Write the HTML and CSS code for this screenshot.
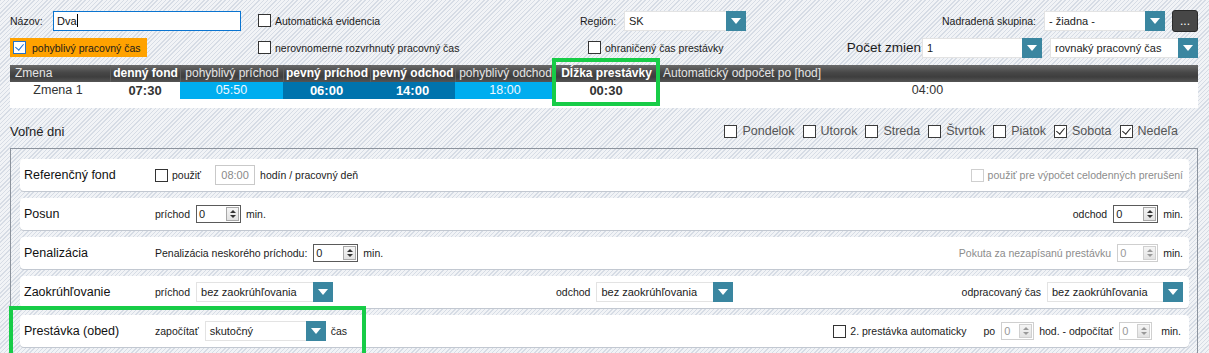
FILE: index.html
```html
<!DOCTYPE html>
<html lang="sk">
<head>
    <meta charset="UTF-8">
    <title>Pracovný čas - skupina</title>
    <link rel="stylesheet" href="styles.css">
</head>
<body>
    <!-- Top settings -->
    <div class="line line1">
        <div class="cell cell-name">
            <span class="lbl lbl-name">Názov:</span>
            <div class="textbox">Dva<span class="caret"></span></div>
        </div>
        <div class="cell cell-auto">
            <label class="check"><span class="box"></span>Automatická evidencia</label>
        </div>
        <div class="cell">
            <span class="lbl lbl-region">Región:</span>
            <div class="select w122"><span>SK</span><i class="arrow"></i></div>
        </div>
        <div class="cell cell-right">
            <span class="lbl">Nadradená skupina:</span>
            <div class="select w121"><span>- žiadna -</span><i class="arrow"></i></div>
            <button class="more">...</button>
        </div>
    </div>

    <div class="line line2">
        <div class="cell cell-name">
            <label class="check flexi"><span class="box checked blue"></span>pohyblivý pracovný čas</label>
        </div>
        <div class="cell cell-uneven">
            <label class="check"><span class="box"></span>nerovnomerne rozvrhnutý pracovný čas</label>
        </div>
        <div class="cell">
            <label class="check"><span class="box"></span>ohraničený čas prestávky</label>
        </div>
        <div class="cell cell-right">
            <span class="lbl lbl-count">Počet zmien</span>
            <div class="select w120"><span>1</span><i class="arrow"></i></div>
            <div class="select w148"><span>rovnaký pracovný čas</span><i class="arrow"></i></div>
        </div>
    </div>

    <!-- Shifts table -->
    <div class="shifts">
        <div class="shifts-head">
            <div class="th left">Zmena</div>
            <div class="th bold">denný fond</div>
            <div class="th">pohyblivý príchod</div>
            <div class="th bold">pevný príchod</div>
            <div class="th bold">pevný odchod</div>
            <div class="th">pohyblivý odchod</div>
            <div class="th bold">Dĺžka prestávky</div>
            <div class="th left">Automatický odpočet po [hod]</div>
        </div>
        <div class="shifts-row">
            <div class="td">Zmena 1</div>
            <div class="td bold">07:30</div>
            <div class="td flex-time">05:50</div>
            <div class="td fixed-time">06:00</div>
            <div class="td fixed-time">14:00</div>
            <div class="td flex-time">18:00</div>
            <div class="td bold">00:30</div>
            <div class="td">04:00</div>
        </div>
    </div>

    <!-- Free days -->
    <div class="free-days">
        <span class="free-title">Voľné dni</span>
        <div class="days">
            <label class="check day"><span class="box"></span>Pondelok</label>
            <label class="check day"><span class="box"></span>Utorok</label>
            <label class="check day"><span class="box"></span>Streda</label>
            <label class="check day"><span class="box"></span>Štvrtok</label>
            <label class="check day"><span class="box"></span>Piatok</label>
            <label class="check day"><span class="box checked"></span>Sobota</label>
            <label class="check day"><span class="box checked"></span>Nedeľa</label>
        </div>
    </div>

    <div class="panel">
        <div class="card">
            <div class="card-title">Referenčný fond</div>
            <label class="check"><span class="box"></span>použiť</label>
            <div class="textbox small disabled">08:00</div>
            <span class="txt">hodín / pracovný deň</span>
            <div class="right">
                <label class="check muted"><span class="box disabled"></span>použiť pre výpočet celodenných prerušení</label>
            </div>
        </div>

        <div class="card">
            <div class="card-title">Posun</div>
            <span class="txt">príchod</span>
            <div class="spin w45"><span>0</span><i class="spin-btn"></i></div>
            <span class="txt">min.</span>
            <div class="right">
                <span class="txt">odchod</span>
                <div class="spin w45"><span>0</span><i class="spin-btn"></i></div>
                <span class="txt">min.</span>
            </div>
        </div>

        <div class="card">
            <div class="card-title">Penalizácia</div>
            <span class="txt">Penalizácia neskorého príchodu:</span>
            <div class="spin w45"><span>0</span><i class="spin-btn"></i></div>
            <span class="txt">min.</span>
            <div class="right">
                <span class="txt muted">Pokuta za nezapísanú prestávku</span>
                <div class="spin w41 disabled"><span>0</span><i class="spin-btn"></i></div>
                <span class="txt">min.</span>
            </div>
        </div>

        <div class="card">
            <div class="card-title">Zaokrúhľovanie</div>
            <div class="group-in">
                <span class="txt">príchod</span>
                <div class="select w137"><span>bez zaokrúhľovania</span><i class="arrow"></i></div>
            </div>
            <div class="group-out">
                <span class="txt">odchod</span>
                <div class="select w137"><span>bez zaokrúhľovania</span><i class="arrow"></i></div>
            </div>
            <div class="right">
                <span class="txt">odpracovaný čas</span>
                <div class="select w136"><span>bez zaokrúhľovania</span><i class="arrow"></i></div>
            </div>
        </div>

        <div class="card">
            <div class="card-title">Prestávka (obed)</div>
            <span class="txt">započítať</span>
            <div class="select w121"><span>skutočný</span><i class="arrow"></i></div>
            <span class="txt">čas</span>
            <div class="right right-lunch">
                <label class="check"><span class="box"></span>2. prestávka automaticky</label>
                <span class="txt gap-po">po</span>
                <div class="spin w33 disabled"><span>0</span><i class="spin-btn"></i></div>
                <span class="txt">hod. - odpočítať</span>
                <div class="spin w33 disabled"><span>0</span><i class="spin-btn"></i></div>
                <span class="txt gap-min">min.</span>
            </div>
        </div>
    </div>

    <!-- highlight marks -->
    <div class="mark mark-break"></div>
    <div class="mark mark-lunch"></div>
</body>
</html>
```

FILE: styles.css
```css
* {
    box-sizing: border-box;
}
body {
    margin: 0;
    width: 1209px;
    height: 353px;
    overflow: hidden;
    position: relative;
    font-family: "Liberation Sans", Arial, sans-serif;
    font-size: 10.5px;
    color: #1b1b1b;
    background: repeating-linear-gradient(135deg, #d6dce5 0 1px, #f1f3f6 1px 3px);
}
.line {
    display: flex;
    align-items: center;
    padding: 0 11px 0 10px;
}
.line1 {
    margin-top: 10px;
    height: 21px;
}
.line2 {
    margin-top: 7px;
    height: 19px;
}
.cell {
    display: flex;
    align-items: center;
    height: 100%;
}
.cell-name {
    width: 248px;
}
.cell-auto {
    width: 322px;
}
.cell-uneven {
    width: 330px;
}
.cell-right {
    margin-left: auto;
}
.lbl-name {
    width: 43px;
}
.lbl-region {
    width: 44px;
}
.lbl-count {
    font-size: 13.5px;
    margin-right: 1px;
}
.cell-right .lbl {
    margin-right: 8px;
}
.lbl-count.lbl {
    margin-right: 1px;
}
.textbox {
    width: 188px;
    height: 20px;
    border: 1px solid #0a74d0;
    background: #fff;
    font-size: 11px;
    line-height: 18px;
    padding-left: 3px;
    color: #111;
}
.caret {
    display: inline-block;
    width: 1px;
    height: 13px;
    background: #000;
    vertical-align: -2px;
}
.textbox.small {
    width: 40px;
    height: 20px;
    margin: 0 5px 0 14px;
    text-align: center;
    padding: 0;
    font-size: 11px;
}
.textbox.disabled {
    border-color: #c9c9c9;
    color: #8a8a8a;
}

/* checkboxes */
.check {
    display: inline-flex;
    align-items: center;
    gap: 4px;
    white-space: nowrap;
}
.box {
    width: 13px;
    height: 13px;
    border: 1px solid #333;
    background: #fff;
    position: relative;
    flex: none;
}
.box.checked::after {
    content: "";
    position: absolute;
    left: 3px;
    top: 0px;
    width: 4px;
    height: 7px;
    border: solid #222;
    border-width: 0 1.5px 1.5px 0;
    transform: rotate(40deg);
}
.box.blue {
    border-color: #2673c9;
}
.box.blue::after {
    border-color: #1f6fd0;
}
.box.disabled {
    border-color: #cfcfcf;
}
.flexi {
    background: #ffa200;
    width: 137px;
    height: 19px;
    padding-left: 3px;
    gap: 6px;
}
.muted {
    color: #8c8c8c;
}

/* dropdowns */
.select {
    display: flex;
    height: 20px;
    background: #fff;
    border: 1px solid #e3e3e3;
    border-right: none;
}
.select span {
    flex: 1;
    padding-left: 4px;
    line-height: 18px;
    font-size: 11px;
    white-space: nowrap;
    overflow: hidden;
}
.arrow {
    width: 20px;
    height: 20px;
    margin-top: -1px;
    background: #3a86a0;
    position: relative;
    flex: none;
}
.arrow::after {
    content: "";
    position: absolute;
    left: 5px;
    top: 7px;
    border-left: 5px solid transparent;
    border-right: 5px solid transparent;
    border-top: 6px solid #fff;
}
.w120 { width: 120px; margin-right: 8px; }
.w121 { width: 121px; }
.w122 { width: 122px; }
.w136 { width: 136px; }
.w137 { width: 137px; }
.w148 { width: 148px; }
.cell-right .w121 {
    margin-right: 7px;
}
.more {
    width: 26px;
    height: 22px;
    border: 1px solid #2a2a2a;
    border-radius: 3px;
    background: #474747;
    color: #fff;
    font-family: inherit;
    font-size: 12px;
    line-height: 14px;
    padding: 0;
}

/* shifts table */
.shifts {
    margin: 8px 11px 0 10px;
    background: #fff;
    height: 43px;
}
.shifts-head,
.shifts-row {
    display: grid;
    grid-template-columns: 100px 70px 103px 87px 85px 100px 102px 1fr;
    height: 17px;
}
.shifts-head {
    background: linear-gradient(#6a6a6a, #474747 45%, #3e3e3e 70%, #555);
}
.th {
    color: #e4e4e4;
    font-size: 12px;
    line-height: 17px;
    text-align: center;
    white-space: nowrap;
    border-left: 1px solid #5e5e5e;
}
.th.left {
    text-align: left;
    padding-left: 5px;
}
.th:first-child {
    border-left: none;
}
.th.bold {
    font-weight: bold;
    color: #fff;
}
.td {
    font-size: 12.5px;
    line-height: 17px;
    text-align: center;
    color: #333;
}
.td:first-child {
    padding-right: 4px;
}
.td.bold {
    font-weight: bold;
    font-size: 13px;
}
.flex-time {
    background: #00adef;
    color: #f0f8ff;
}
.fixed-time {
    background: #0073ad;
    color: #fff;
    font-weight: bold;
    font-size: 13px;
}

/* free days */
.free-days {
    display: flex;
    align-items: center;
    height: 18px;
    margin-top: 14px;
    padding: 0 31px 0 10px;
}
.free-title {
    font-size: 13px;
    color: #222;
}
.days {
    margin-left: auto;
    display: flex;
    gap: 8px;
}
.day {
    font-size: 12.5px;
    color: #555;
    gap: 5px;
}
.day .box {
    border-color: #3a3a3a;
}

/* panel with rules */
.panel {
    margin: 8px 11px 0 10px;
    height: 220px;
    border: 1px solid #8c939d;
    border-bottom: none;
    padding: 10px 8px 0 9px;
}
.card {
    display: flex;
    align-items: center;
    height: 32px;
    margin-bottom: 7px;
    background: #fff;
    border-radius: 4px;
    box-shadow: 0 1px 0 #c2c8d1;
    padding: 0 6px 0 4px;
    white-space: nowrap;
}
.card-title {
    width: 131px;
    font-size: 12.5px;
    color: #111;
    flex: none;
}
.card .right {
    margin-left: auto;
    display: flex;
    align-items: center;
}
.txt {
    margin-right: 6px;
}
.right .txt,
.card .select + .txt,
.card .spin + .txt {
    margin-left: 5px;
}
.right .txt:first-child {
    margin-left: 0;
}
.right .txt:last-child {
    margin-right: 0;
}
.right-lunch {
    margin-right: 2px;
}
.group-in {
    width: 401px;
    display: flex;
    align-items: center;
}
.group-out {
    display: flex;
    align-items: center;
}
.gap-po {
    margin-left: 17px !important;
}
.gap-min {
    margin-left: 9px !important;
}

/* spinners */
.spin {
    display: flex;
    height: 18px;
    border: 1px solid #5a5a5a;
    background: #fff;
}
.spin span {
    flex: 1;
    padding-left: 2px;
    line-height: 16px;
    font-size: 11px;
}
.spin-btn {
    width: 13px;
    margin: 1px;
    border: 1px solid #a8a8a8;
    background: linear-gradient(#f5f5f5, #e2e2e2);
    position: relative;
}
.spin-btn::before,
.spin-btn::after {
    content: "";
    position: absolute;
    left: 3px;
    border-left: 3px solid transparent;
    border-right: 3px solid transparent;
}
.spin-btn::before {
    top: 2px;
    border-bottom: 3px solid #333;
}
.spin-btn::after {
    bottom: 2px;
    border-top: 3px solid #333;
}
.spin.disabled {
    border-color: #cfcfcf;
    color: #999;
}
.spin.disabled .spin-btn {
    border-color: #d0d0d0;
}
.spin.disabled .spin-btn::before {
    border-bottom-color: #999;
}
.spin.disabled .spin-btn::after {
    border-top-color: #999;
}
.w45 { width: 45px; }
.w41 { width: 41px; }
.w33 { width: 33px; }

/* green highlight marks */
.mark {
    position: absolute;
    border: 4px solid #17cc47;
}
.mark-break {
    left: 552px;
    top: 58px;
    width: 108px;
    height: 48px;
}
.mark-lunch {
    left: 9px;
    top: 306px;
    width: 357px;
    height: 52px;
}
```
